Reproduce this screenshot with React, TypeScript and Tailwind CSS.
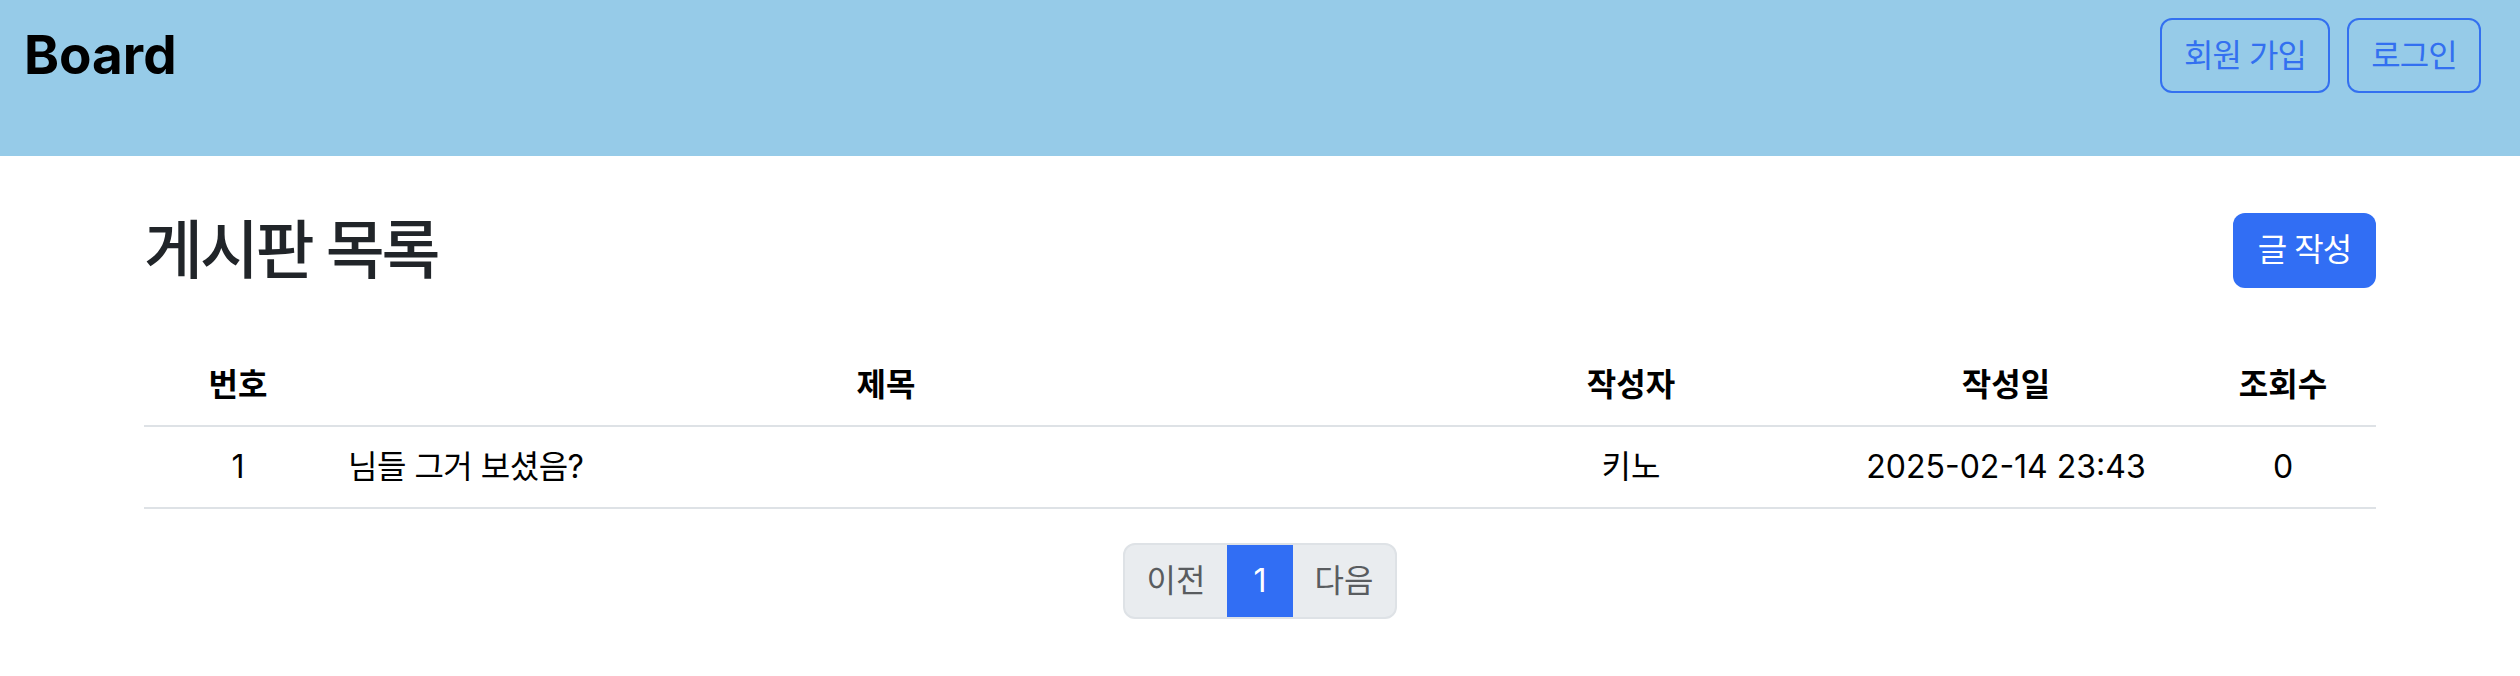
import React from "react";

type Post = {
  id: number;
  title: string;
  author: string;
  createdAt: string;
  views: number;
};

const posts: Post[] = [
  { id: 1, title: "님들 그거 보셨음?", author: "키노", createdAt: "2025-02-14 23:43", views: 0 },
];

function Header() {
  return (
    <header className="h-[156px] bg-[#96cbe8] px-6 pt-[18px]">
      <div className="flex items-center justify-between h-[75px]">
        <span className="text-[53px] leading-[1.2] font-bold text-black">Board</span>
        <div className="flex items-center gap-[17px] pr-[15px]">
          <button className="h-[75px] w-[170px] rounded-[12px] border-2 border-[#3370f0] text-[#3370f0] text-[32px] leading-[1.5] tracking-[-1px]">
            회원 가입
          </button>
          <button className="h-[75px] w-[134px] rounded-[12px] border-2 border-[#3370f0] text-[#3370f0] text-[32px] leading-[1.5] tracking-[-1px]">
            로그인
          </button>
        </div>
      </div>
    </header>
  );
}

function Pagination() {
  return (
    <div className="flex justify-center mt-[34px]">
      <div className="flex h-[76px] text-[32px] rounded-[12px] overflow-hidden border-2 border-[#dee2e6] bg-[#e9ecef]">
        <button className="w-[102px] text-[#595c5f]">이전</button>
        <button className="w-[66px] bg-[#316ef4] text-white">1</button>
        <button className="w-[102px] text-[#595c5f]">다음</button>
      </div>
    </div>
  );
}

export default function App() {
  return (
    <div className="min-h-screen bg-white font-['Inter','Noto_Sans_CJK_KR',sans-serif] text-[#212529]">
      <Header />
      <main className="mx-auto w-[2280px] px-6">
        <div className="flex items-center justify-between mt-[56px]">
          <h2 className="text-[64px] leading-[1.2] font-medium tracking-[-3px]">게시판 목록</h2>
          <button className="h-[75px] w-[143px] rounded-[12px] bg-[#316ef4] text-white text-[32px] tracking-[-1px]">
            글 작성
          </button>
        </div>
        <table className="w-full table-fixed mt-[56px] text-[32px] text-black border-collapse">
          <colgroup>
            <col className="w-[188px]" />
            <col className="w-[1108px]" />
            <col className="w-[382px]" />
            <col className="w-[368px]" />
            <col className="w-[186px]" />
          </colgroup>
          <thead>
            <tr className="border-b-2 border-[#dee2e6]">
              <th className="py-4 px-4 font-bold leading-[1.5] text-center">번호</th>
              <th className="py-4 px-4 font-bold leading-[1.5] text-center">제목</th>
              <th className="py-4 px-4 font-bold leading-[1.5] text-center">작성자</th>
              <th className="py-4 px-4 font-bold leading-[1.5] text-center">작성일</th>
              <th className="py-4 px-4 font-bold leading-[1.5] text-center">조회수</th>
            </tr>
          </thead>
          <tbody>
            {posts.map((p) => (
              <tr key={p.id} className="border-b-2 border-[#dee2e6]">
                <td className="py-4 px-4 leading-[1.5] text-center">{p.id}</td>
                <td className="py-4 px-4 leading-[1.5] text-left tracking-[-0.5px]">{p.title}</td>
                <td className="py-4 px-4 leading-[1.5] text-center">{p.author}</td>
                <td className="py-4 px-4 leading-[1.5] text-center">{p.createdAt}</td>
                <td className="py-4 px-4 leading-[1.5] text-center">{p.views}</td>
              </tr>
            ))}
          </tbody>
        </table>
        <Pagination />
      </main>
    </div>
  );
}
